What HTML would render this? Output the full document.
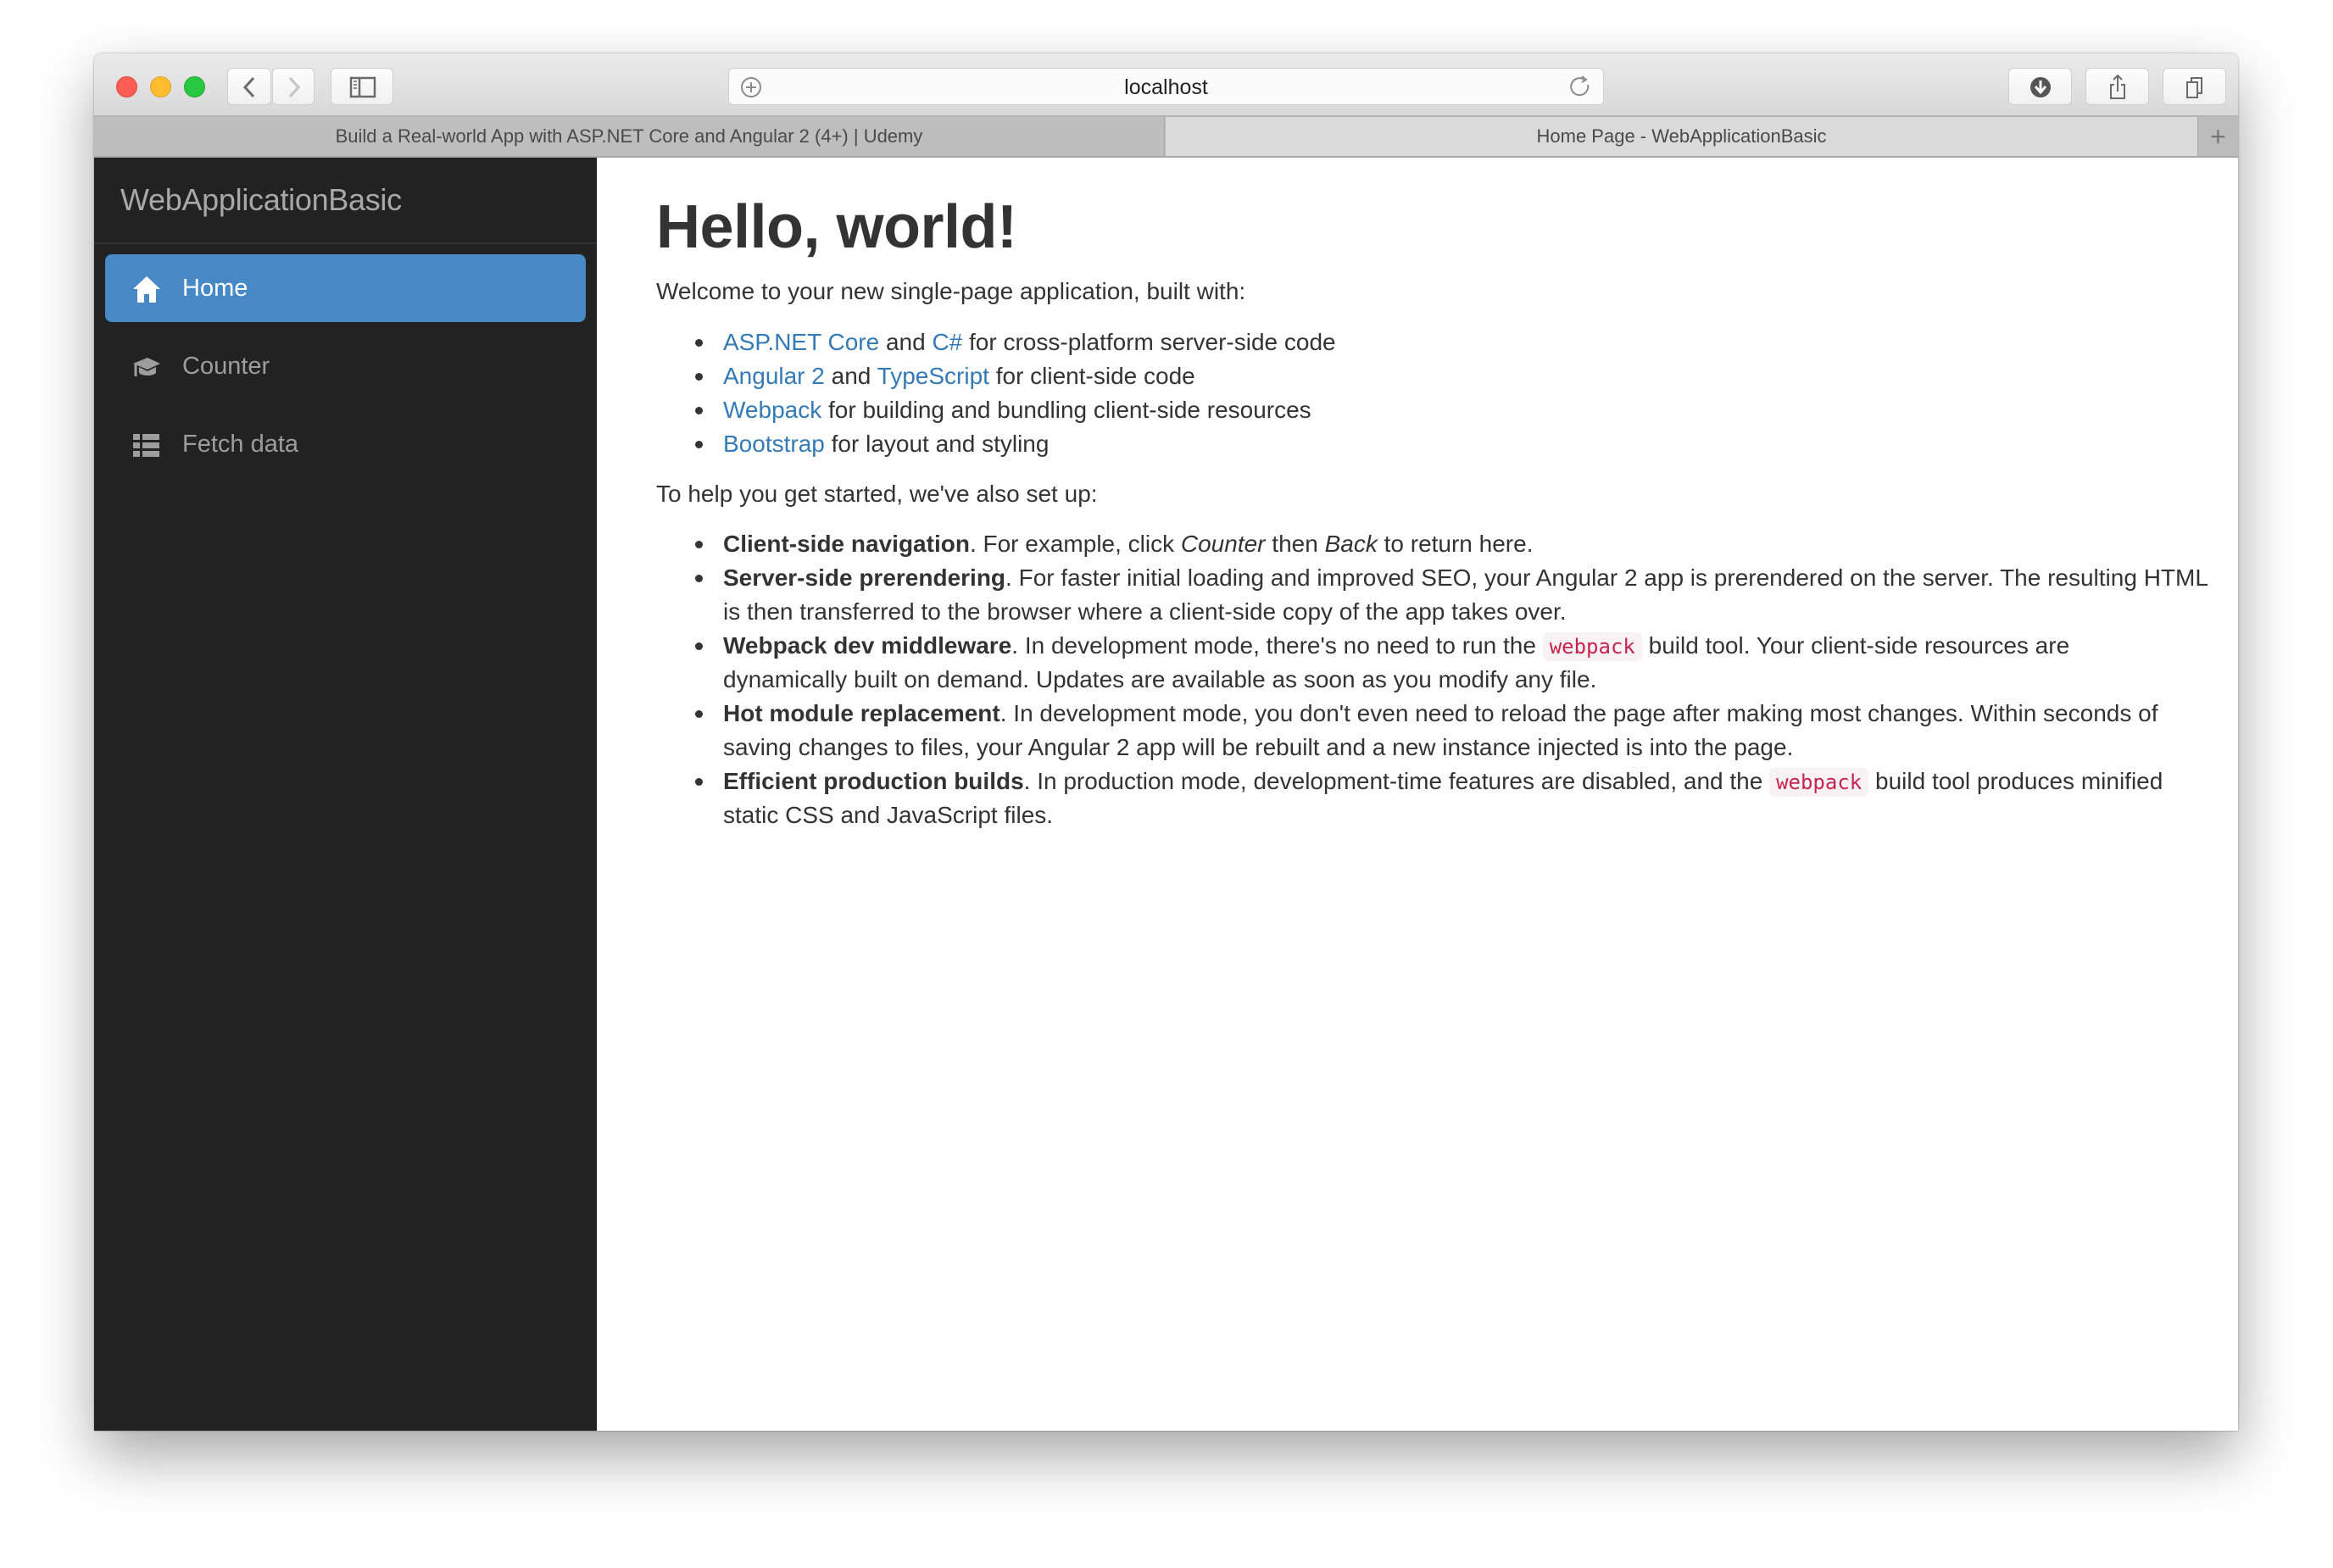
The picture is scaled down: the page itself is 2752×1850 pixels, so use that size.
<!DOCTYPE html>
<html><head><meta charset="utf-8"><style>
*{margin:0;padding:0;box-sizing:border-box}
body{width:2752px;height:1850px;background:#fff;position:relative;overflow:hidden;font-family:"Liberation Sans",Arial,sans-serif}
.win{position:absolute;left:111px;top:63px;width:2529px;height:1625px;border-radius:10px 10px 0 0;overflow:hidden;box-shadow:0 30px 70px rgba(0,0,0,.35),0 0 2px rgba(0,0,0,.4);background:#fff}
.tb{position:absolute;left:0;top:0;width:100%;height:75px;background:linear-gradient(#ecebec,#d9d8d9);border-bottom:2px solid #b4b3b4}
.dot{position:absolute;top:27px;width:25px;height:25px;border-radius:50%}
.btn{position:absolute;top:17px;height:44px;background:linear-gradient(#fdfdfd,#f0f0f0);border:1px solid #cfcfcf;border-radius:6px}
.tabs{position:absolute;left:0;top:75px;width:100%;height:48px;background:#bebdbe;border-bottom:2px solid #a9a8a9}
.tab{position:absolute;top:0;height:46px;line-height:46px;text-align:center;font-size:22px;color:#4a4a4a}
.side{position:absolute;left:0;top:123px;width:593px;bottom:0;background:#222}
.brand{position:absolute;left:31px;top:0;height:100px;line-height:100px;font-size:36px;color:#a8a8a8;letter-spacing:-.3px}
.sep{position:absolute;left:0;top:100px;width:100%;height:2px;background:#333}
.nav{position:absolute;left:13px;width:567px;height:80px;border-radius:8px;font-size:29px;color:#9d9d9d;line-height:80px}
.nav span{position:absolute;left:91px}
.nav svg{position:absolute;left:32px;top:24px}
.main{position:absolute;left:593px;top:123px;right:0;bottom:0;color:#333;font-size:28px}
.main .b{position:absolute;left:70px;white-space:nowrap;line-height:40px}
h1{font-size:72px;font-weight:bold;line-height:80px;letter-spacing:-.5px}
ul{list-style:none}
li{position:relative;padding-left:79px}
li:before{content:"";position:absolute;left:46px;top:16px;width:9px;height:9px;border-radius:50%;background:#333}
a{color:#337ab7;text-decoration:none}
code{font-family:"DejaVu Sans Mono","Liberation Mono",monospace;font-size:24px;line-height:1;color:#c7254e;background:#f9f2f4;border-radius:6px;padding:3px 8px}
</style></head><body>
<div class="win">
 <div class="tb">
  <div class="dot" style="left:26px;background:#fd5f57;border:1px solid #e1463f"></div>
  <div class="dot" style="left:66px;background:#febc2e;border:1px solid #e0a12a"></div>
  <div class="dot" style="left:106px;background:#28c840;border:1px solid #1ea833"></div>
  <div class="btn" style="left:157px;width:52px"><svg width="52" height="44" viewBox="0 0 52 44"><path d="M30 11 L20 22 L30 33" fill="none" stroke="#6b6b6b" stroke-width="3"/></svg></div>
  <div class="btn" style="left:210px;width:50px"><svg width="50" height="44" viewBox="0 0 50 44"><path d="M20 11 L30 22 L20 33" fill="none" stroke="#c3c3c3" stroke-width="3"/></svg></div>
  <div class="btn" style="left:279px;width:74px"><svg width="74" height="44" viewBox="0 0 74 44"><rect x="23" y="11" width="28" height="22" fill="none" stroke="#6b6b6b" stroke-width="2.5"/><line x1="33" y1="11" x2="33" y2="33" stroke="#6b6b6b" stroke-width="2.5"/><path d="M26 15h4M26 19h4M26 23h4" stroke="#6b6b6b" stroke-width="1.5"/></svg></div>
  <div class="btn" style="left:748px;width:1033px;background:#fbfbfb"><svg width="40" height="44" viewBox="0 0 40 44" style="position:absolute;left:6px;top:0"><circle cx="20" cy="22" r="11" fill="none" stroke="#8a8a8a" stroke-width="2"/><path d="M20 16v12M14 22h12" stroke="#8a8a8a" stroke-width="2"/></svg><div style="position:absolute;left:0;right:0;top:0;line-height:44px;text-align:center;font-size:25px;color:#222">localhost</div><svg width="40" height="44" viewBox="0 0 40 44" style="position:absolute;right:6px;top:0"><path d="M24 13 A10 10 0 1 0 28 19" fill="none" stroke="#8a8a8a" stroke-width="2"/><path d="M21 9 L26 13 L21 16" fill="none" stroke="#8a8a8a" stroke-width="2"/></svg></div>
  <div class="btn" style="left:2258px;width:75px"><svg width="75" height="44" viewBox="0 0 75 44"><circle cx="37" cy="22" r="12" fill="#555"/><path d="M37 14v13M31 21l6 7 6-7" fill="none" stroke="#fff" stroke-width="3"/></svg></div>
  <div class="btn" style="left:2349px;width:75px"><svg width="75" height="44" viewBox="0 0 75 44"><path d="M33 19h-4v16h16V19h-4" fill="none" stroke="#6b6b6b" stroke-width="2"/><path d="M37 27V8M32 13l5-5 5 5" fill="none" stroke="#6b6b6b" stroke-width="2"/></svg></div>
  <div class="btn" style="left:2440px;width:75px"><svg width="75" height="44" viewBox="0 0 75 44"><rect x="28" y="16" width="12" height="18" fill="none" stroke="#6b6b6b" stroke-width="2"/><path d="M33 16v-5h12v18h-5" fill="none" stroke="#6b6b6b" stroke-width="2"/></svg></div>
 </div>
 <div class="tabs">
  <div class="tab" style="left:0;width:1263px;background:#bfbebf;border-right:1px solid #a9a8a9">Build a Real-world App with ASP.NET Core and Angular 2 (4+) | Udemy</div>
  <div class="tab" style="left:1264px;width:1217px;background:#dbdadb">Home Page - WebApplicationBasic</div>
  <div class="tab" style="left:2481px;width:48px;background:#bdbcbd;border-left:1px solid #a9a8a9;font-size:32px;color:#777">+</div>
 </div>
 <div class="side">
  <div class="brand">WebApplicationBasic</div>
  <div class="sep"></div>
  <div class="nav" style="top:114px;background:#4689c6;color:#fff"><svg width="34" height="34" viewBox="0 0 34 34"><path d="M17 2 L33 17 H28 V33 H20 V23 H14 V33 H6 V17 H1 Z" fill="#fff"/></svg><span>Home</span></div>
  <div class="nav" style="top:206px"><svg width="34" height="34" viewBox="0 0 34 34"><path d="M1 13 L18 6 L33 13 L18 20 Z" fill="#9d9d9d"/><path d="M8 17 V24 C12 28 24 28 28 24 V17 L18 22 Z" fill="#9d9d9d"/><path d="M4 14 V28" stroke="#9d9d9d" stroke-width="3"/></svg><span>Counter</span></div>
  <div class="nav" style="top:298px"><svg width="34" height="34" viewBox="0 0 34 34"><path d="M1 4h8v7H1zM12 4h20v7H12zM1 14h8v7H1zM12 14h20v7H12zM1 24h8v7H1zM12 24h20v7H12z" fill="#9d9d9d"/></svg><span>Fetch data</span></div>
 </div>
 <div class="main">
  <h1 class="b" style="top:62px">Hello, world!</h1>
  <p class="b" style="top:138px">Welcome to your new single-page application, built with:</p>
  <ul class="b" style="top:198px;left:70px">
   <li><a>ASP.NET Core</a> and <a>C#</a> for cross-platform server-side code</li>
   <li><a>Angular 2</a> and <a>TypeScript</a> for client-side code</li>
   <li><a>Webpack</a> for building and bundling client-side resources</li>
   <li><a>Bootstrap</a> for layout and styling</li>
  </ul>
  <p class="b" style="top:377px">To help you get started, we've also set up:</p>
  <ul class="b" style="top:436px">
   <li><b>Client-side navigation</b>. For example, click <i>Counter</i> then <i>Back</i> to return here.</li>
   <li><b>Server-side prerendering</b>. For faster initial loading and improved SEO, your Angular 2 app is prerendered on the server. The resulting HTML<br>is then transferred to the browser where a client-side copy of the app takes over.</li>
   <li><b>Webpack dev middleware</b>. In development mode, there's no need to run the <code>webpack</code> build tool. Your client-side resources are<br>dynamically built on demand. Updates are available as soon as you modify any file.</li>
   <li><b>Hot module replacement</b>. In development mode, you don't even need to reload the page after making most changes. Within seconds of<br>saving changes to files, your Angular 2 app will be rebuilt and a new instance injected is into the page.</li>
   <li><b>Efficient production builds</b>. In production mode, development-time features are disabled, and the <code>webpack</code> build tool produces minified<br>static CSS and JavaScript files.</li>
  </ul>
 </div>
</div>
</body></html>
